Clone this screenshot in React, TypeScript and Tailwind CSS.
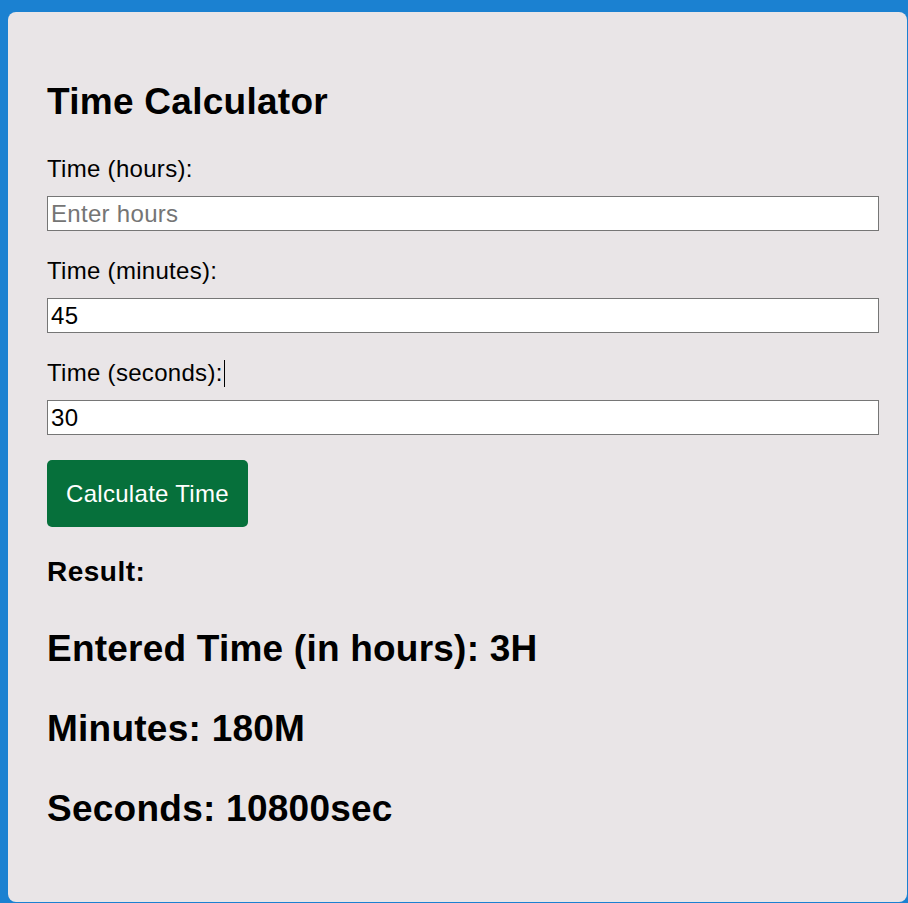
import { useState } from "react";

export default function App() {
  const [hours, setHours] = useState("");
  const [minutes, setMinutes] = useState("45");
  const [seconds, setSeconds] = useState("30");

  return (
    <div className="min-h-screen bg-[#1b81d1] pt-[12px] pl-[8px] pr-[1px] pb-[1px] font-['Liberation_Sans',Arial,sans-serif] text-black">
      <div className="bg-[#e9e5e7] rounded-lg pl-[39px] pr-[28px] pt-[69px] pb-[72px]">
        <h2 className="text-[37px] leading-[42px] font-bold tracking-[0.27px]">Time Calculator</h2>

        {/* Inputs */}
        <label className="block mt-[32px] text-[24px] leading-[28px] tracking-[0.3px]">Time (hours):</label>
        <input
          type="text"
          value={hours}
          onChange={(e) => setHours(e.target.value)}
          placeholder="Enter hours"
          className="block w-full h-[35px] mt-[13px] px-[3px] bg-white border border-[#767676] text-[24px] leading-[28px] tracking-[0.3px] outline-none placeholder:text-[#757575]"
        />

        <label className="block mt-[26px] text-[24px] leading-[28px] tracking-[0.3px]">Time (minutes):</label>
        <input
          type="text"
          value={minutes}
          onChange={(e) => setMinutes(e.target.value)}
          className="block w-full h-[35px] mt-[13px] px-[3px] bg-white border border-[#767676] text-[24px] leading-[28px] tracking-[0.3px] outline-none"
        />

        <label className="flex items-center mt-[26px] text-[24px] leading-[28px] tracking-[0.3px]">
          Time (seconds):
          <span className="inline-block w-px h-[27px] bg-black ml-[1px]" />
        </label>
        <input
          type="text"
          value={seconds}
          onChange={(e) => setSeconds(e.target.value)}
          className="block w-full h-[35px] mt-[13px] px-[3px] bg-white border border-[#767676] text-[24px] leading-[28px] tracking-[0.3px] outline-none"
        />

        <button className="block mt-[25px] h-[67px] px-[19px] rounded-[5px] bg-[#06703b] text-white text-[24px] leading-[28px] tracking-[0.3px]">
          Calculate Time
        </button>

        {/* Result */}
        <h3 className="mt-[29px] text-[28px] leading-[32px] font-bold tracking-[0.5px]">Result:</h3>
        <p className="mt-[40px] text-[37px] leading-[42px] font-bold tracking-[0.22px]">Entered Time (in hours): 3H</p>
        <p className="mt-[38px] text-[37px] leading-[42px] font-bold tracking-[0.25px]">Minutes: 180M</p>
        <p className="mt-[38px] text-[37px] leading-[42px] font-bold tracking-[0.25px]">Seconds: 10800sec</p>
      </div>
    </div>
  );
}
